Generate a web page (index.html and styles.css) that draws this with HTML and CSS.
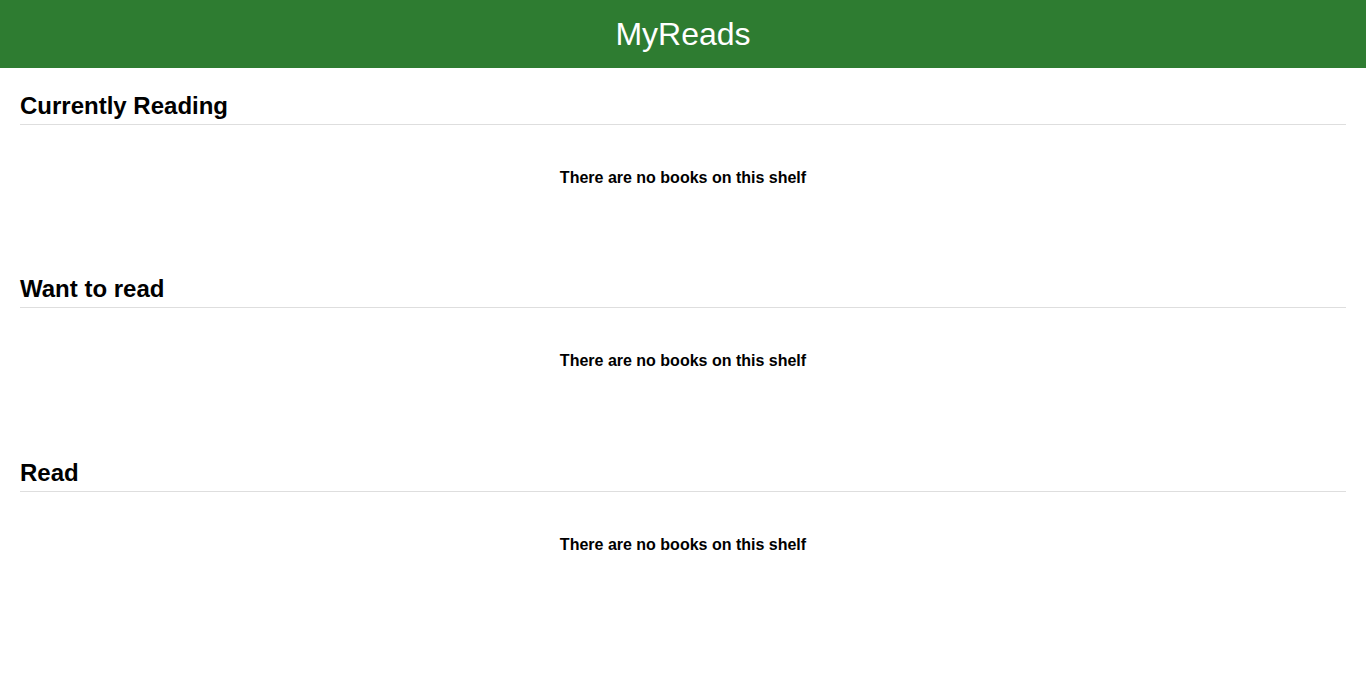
FILE: index.html
```html
<!DOCTYPE html>
<html lang="en">
<head>
<meta charset="utf-8">
<title>MyReads</title>
<link rel="stylesheet" href="styles.css">
</head>
<body>
<div class="app">
  <div class="list-books">
    <div class="list-books-title">
      <h1>MyReads</h1>
    </div>
    <div class="list-books-content">
      <div class="bookshelf">
        <h2 class="bookshelf-title">Currently Reading</h2>
        <div class="bookshelf-books">
          <ol class="books-grid">
            <h4 class="empty-shelf">There are no books on this shelf</h4>
          </ol>
        </div>
      </div>
      <div class="bookshelf">
        <h2 class="bookshelf-title">Want to read</h2>
        <div class="bookshelf-books">
          <ol class="books-grid">
            <h4 class="empty-shelf">There are no books on this shelf</h4>
          </ol>
        </div>
      </div>
      <div class="bookshelf">
        <h2 class="bookshelf-title">Read</h2>
        <div class="bookshelf-books">
          <ol class="books-grid">
            <h4 class="empty-shelf">There are no books on this shelf</h4>
          </ol>
        </div>
      </div>
    </div>
  </div>
</div>
</body>
</html>
```

FILE: styles.css
```css
html, body {
  margin: 0;
  padding: 0;
}
body {
  font-family: "Liberation Sans", Arial, sans-serif;
  line-height: 1.5;
  color: #000;
  background: #fff;
}
.list-books-title {
  padding: 10px 0;
  background: #2e7c31;
  text-align: center;
}
.list-books-title h1 {
  font-size: 32px;
  font-weight: 400;
  margin: 0;
  color: #fff;
}
.list-books-content {
  padding: 0 0 80px;
}
.bookshelf {
  padding: 0 20px 40px;
}
.bookshelf-title {
  font-size: 24px;
  font-weight: 700;
  margin: 19.92px 0;
  border-bottom: 1px solid #dedede;
}
.bookshelf-books {
  text-align: center;
}
.books-grid {
  list-style-type: none;
  padding: 0;
  margin: 0;
  display: flex;
  justify-content: center;
  flex-wrap: wrap;
}
.empty-shelf {
  font-size: 16px;
  font-weight: 700;
  margin: 21.28px 0;
}
```
